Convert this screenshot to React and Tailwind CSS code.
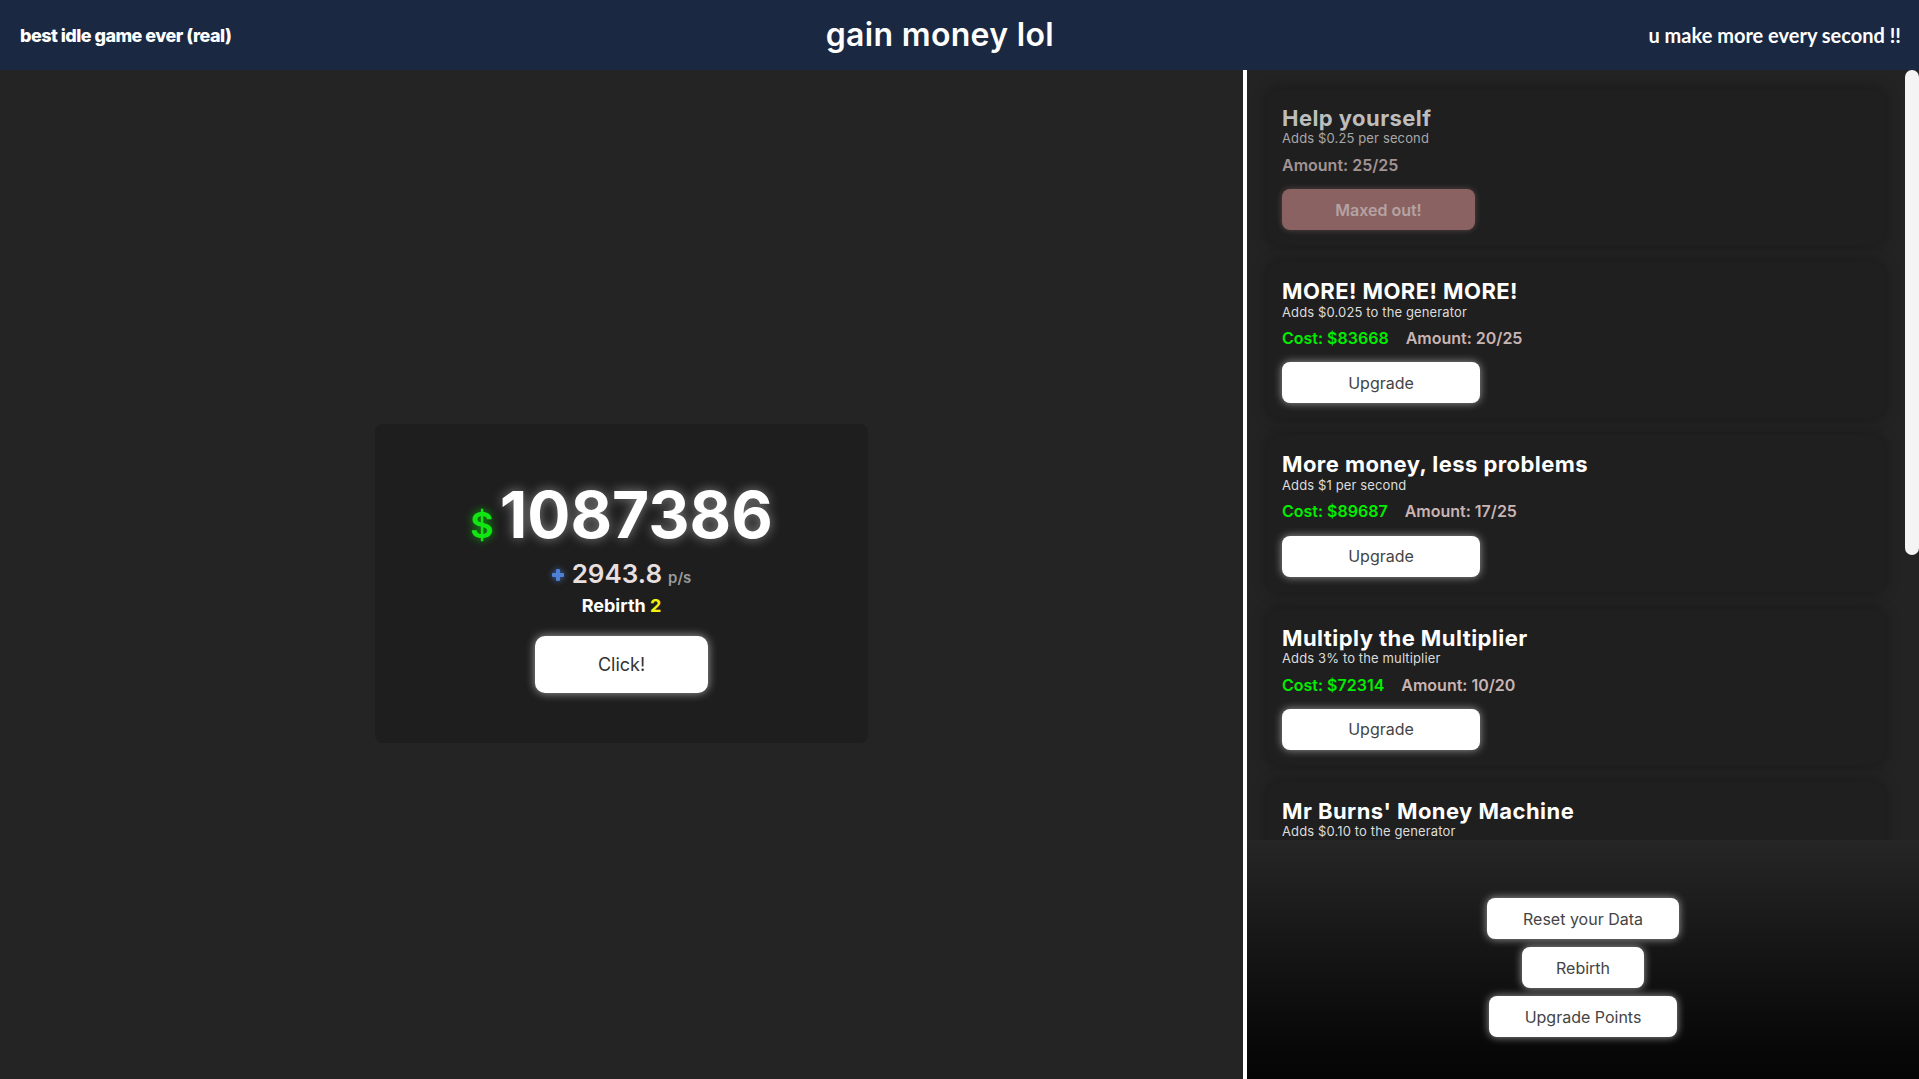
const upgrades = [
  { title: "Help yourself", desc: "Adds $0.25 per second", cost: null, amount: "25/25", maxed: true },
  { title: "MORE! MORE! MORE!", desc: "Adds $0.025 to the generator", cost: "83668", amount: "20/25" },
  { title: "More money, less problems", desc: "Adds $1 per second", cost: "89687", amount: "17/25" },
  { title: "Multiply the Multiplier", desc: "Adds 3% to the multiplier", cost: "72314", amount: "10/20" },
  { title: "Mr Burns' Money Machine", desc: "Adds $0.10 to the generator", cost: "95210", amount: "6/25" },
  { title: "Money Printer", desc: "Adds $5 per second", cost: "120500", amount: "3/25" },
  { title: "Stonks", desc: "Adds 5% to the multiplier", cost: "150000", amount: "1/10" },
];

function UpgradeCard({ item }) {

  if (item.maxed) {
    return (
      <div className="rounded-xl bg-[#1f1f1f] pt-4 pb-[15px] px-[15px] shadow-[0_0_14px_rgba(0,0,0,0.35)]">
        <h3 className="text-[22px] leading-[1.2] font-bold tracking-[0.02em] text-[#bdbdbd]">{item.title}</h3>
        <p className="text-[13px] leading-[1.2] tracking-[0.01em] text-[#a8a8a8]">{item.desc}</p>
        <p className="mt-[9px] text-[16px] leading-[1.2] font-semibold text-[#a39393]">
          Amount: {item.amount}
        </p>
        <button className="mt-[14px] w-[193px] h-[41px] rounded-lg bg-[#8a6262] text-[16px] font-semibold text-[#b5a3a3] shadow-[0_0_6px_rgba(200,150,150,0.35)]">
          Maxed out!
        </button>
      </div>
    );
  }

  return (
    <div className="rounded-xl bg-[#1f1f1f] pt-4 pb-[15px] px-[15px] shadow-[0_0_14px_rgba(0,0,0,0.35)]">
      <h3 className="text-[22px] leading-[1.2] font-bold tracking-[0.02em] text-white">{item.title}</h3>
      <p className="text-[13px] leading-[1.2] tracking-[0.01em] text-[#dcdcdc]">{item.desc}</p>
      <div className="mt-[9px] flex gap-[17px] text-[16px] leading-[1.2] font-semibold">
        <span className="text-[#00ee00]">Cost: ${item.cost}</span>
        <span className="text-[#c9b4b4]">Amount: {item.amount}</span>
      </div>
      <button className="mt-[14px] w-[198px] h-[41px] rounded-lg bg-white text-[16px] text-[#444] shadow-[0_0_8px_rgba(255,255,255,0.55)]">
        Upgrade
      </button>
    </div>
  );
}

function PlusIcon() {
  return (
    <svg width="12" height="12" viewBox="0 0 12 12" className="drop-shadow-[0_0_3px_rgba(80,130,220,0.8)]">
      <rect x="4" y="0" width="4" height="12" rx="1" fill="#4f80d8" />
      <rect x="0" y="4" width="12" height="4" rx="1" fill="#4f80d8" />
    </svg>
  );
}

export default function App() {

  return (
    <div className="w-[1919px] h-[1079px] flex flex-col bg-[#242424] font-['Inter',sans-serif] overflow-hidden">

      {/* HEADER */}

      <header className="h-[70px] shrink-0 bg-[#1a2842] flex items-center justify-between pl-5 pr-[18px] text-white">
        <span className="text-[18px] font-extrabold tracking-[-0.03em]">best idle game ever (real)</span>
        <span className="text-[32px] font-semibold tracking-[0.01em]">gain money lol</span>
        <span className="text-[20px] font-bold font-['Lato',sans-serif]">u make more every second !!</span>
      </header>

      <div className="flex flex-1 min-h-0">

        {/* LEFT: MONEY */}

        <main className="w-[1243px] shrink-0 flex items-center justify-center pt-[18px] bg-[#242424]">
          <div className="w-[493px] h-[319px] rounded-lg bg-[#1e1e1e] flex flex-col items-center pt-[59px]">

            <div className="flex items-baseline h-[64px] leading-none">
              <span className="text-[36px] font-semibold text-[#12e612] mr-[6px] [text-shadow:0_0_8px_rgba(0,255,0,0.6)]">$</span>
              <span className="text-[64px] font-bold text-white [text-shadow:0_0_12px_rgba(255,255,255,0.45)]">1087386</span>
            </div>

            <div className="mt-[11px] flex items-baseline gap-[6px] leading-[1.2]">
              <span className="self-center pt-[3px] mr-[2px]"><PlusIcon /></span>
              <span className="text-[26px] font-semibold text-[#e8dfdf]">2943.8</span>
              <span className="text-[15px] font-semibold text-[#9a9a9a]">p/s</span>
            </div>

            <div className="mt-[6px] text-[18px] leading-[1.2] font-bold text-white">
              Rebirth <span className="text-[#f2f20f]">2</span>
            </div>

            <button className="mt-[19px] w-[173px] h-[57px] rounded-[10px] bg-white text-[18px] text-[#333] shadow-[0_0_10px_rgba(255,255,255,0.6)]">
              Click!
            </button>

          </div>
        </main>

        {/* RIGHT: UPGRADES */}

        <aside className="flex-1 flex flex-col border-l-4 border-white bg-[#232323]">

          <div className="h-[770px] shrink-0 flex">

            <div className="flex-1 overflow-y-auto [scrollbar-width:none]">
              <div className="flex flex-col gap-[17px] pt-[19px] pb-5 px-5">
                {upgrades.map((u) => (
                  <UpgradeCard key={u.title} item={u} />
                ))}
              </div>
            </div>

            {/* SCROLLBAR */}

            <div className="w-[14px] shrink-0">
              <div className="h-[485px] rounded-full bg-[#f4f4f4]" />
            </div>

          </div>

          <div className="flex-1 flex flex-col items-center gap-2 pt-[58px] bg-linear-to-b from-[#262626] to-[#050505]">
            <button className="w-[192px] h-[41px] rounded-lg bg-white text-[16px] text-[#444] shadow-[0_0_8px_rgba(255,255,255,0.6)]">
              Reset your Data
            </button>
            <button className="w-[122px] h-[41px] rounded-lg bg-white text-[16px] text-[#444] shadow-[0_0_8px_rgba(255,255,255,0.6)]">
              Rebirth
            </button>
            <button className="w-[188px] h-[41px] rounded-lg bg-white text-[16px] text-[#444] shadow-[0_0_8px_rgba(255,255,255,0.6)]">
              Upgrade Points
            </button>
          </div>

        </aside>

      </div>

    </div>
  );
}
